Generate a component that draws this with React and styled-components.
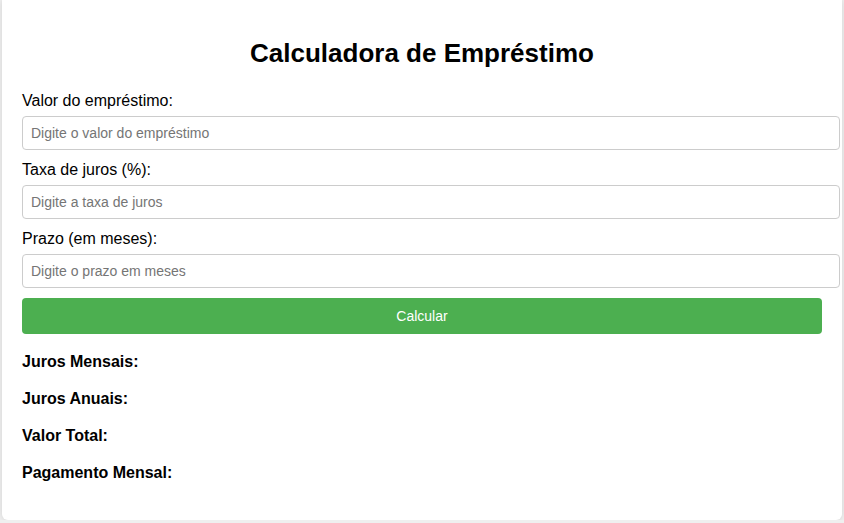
import React, { useState } from 'react';
import styled, { createGlobalStyle } from 'styled-components';

const GlobalStyle = createGlobalStyle`
  html, body {
    margin: 0;
    padding: 0;
    background: #efefef;
    font-family: "Liberation Sans", Arial, sans-serif;
  }
`;

const Card = styled.div`
  width: 800px;
  margin: 0 auto;
  padding: 20px;
  background: #fff;
  border-radius: 0 0 6px 6px;
  box-shadow: 0 0 6px rgba(0, 0, 0, 0.12);
`;

const Title = styled.h1`
  margin: 18px 0 23px;
  font-size: 26px;
  line-height: 30px;
  font-weight: bold;
  text-align: center;
  color: #000;
`;

const Label = styled.label`
  display: block;
  margin-bottom: 6px;
  font-size: 16px;
  line-height: 19px;
  color: #000;
`;

const Input = styled.input`
  display: block;
  width: 100%;
  box-sizing: content-box;
  padding: 8px;
  margin: 0 0 10px;
  border: 1px solid #ccc;
  border-radius: 4px;
  font-family: inherit;
  font-size: 14px;
  line-height: 16px;
  height: 16px;
  color: #000;

  &::placeholder {
    color: #757575;
  }
`;

const Button = styled.button`
  display: block;
  width: 100%;
  height: 36px;
  padding: 0;
  border: none;
  border-radius: 4px;
  background: #4caf50;
  color: #fff;
  font-family: inherit;
  font-size: 14px;
  cursor: pointer;
`;

const Result = styled.p`
  margin: 18px 0;
  font-size: 16px;
  line-height: 19px;
  font-weight: bold;
  color: #000;
`;

const fields = [
  { id: 'valor', label: 'Valor do empréstimo:', placeholder: 'Digite o valor do empréstimo' },
  { id: 'taxa', label: 'Taxa de juros (%):', placeholder: 'Digite a taxa de juros' },
  { id: 'prazo', label: 'Prazo (em meses):', placeholder: 'Digite o prazo em meses' },
];

const results = ['Juros Mensais:', 'Juros Anuais:', 'Valor Total:', 'Pagamento Mensal:'];

const App = () => {
  const [values, setValues] = useState({ valor: '', taxa: '', prazo: '' });

  return (
    <>
      <GlobalStyle />
      <Card>
        <Title>Calculadora de Empréstimo</Title>
        {fields.map((f) => (
          <div key={f.id}>
            <Label htmlFor={f.id}>{f.label}</Label>
            <Input
              id={f.id}
              type="number"
              placeholder={f.placeholder}
              value={values[f.id]}
              onChange={(e) => setValues({ ...values, [f.id]: e.target.value })}
            />
          </div>
        ))}
        <Button type="button">Calcular</Button>
        {results.map((r) => (
          <Result key={r}>{r}</Result>
        ))}
      </Card>
    </>
  );
};

export default App;
